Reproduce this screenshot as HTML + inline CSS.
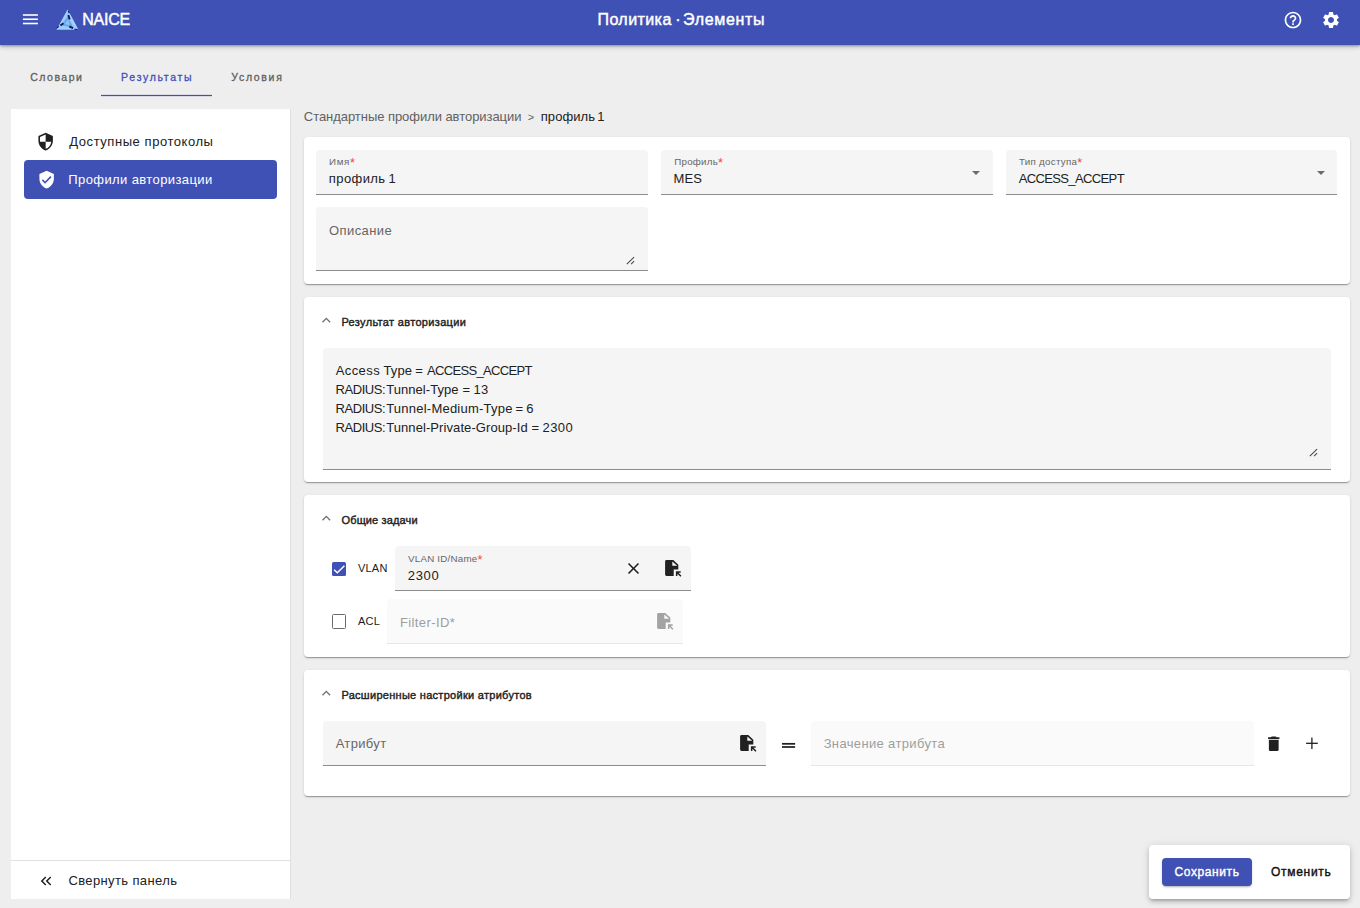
<!DOCTYPE html>
<html lang="ru">
<head>
<meta charset="utf-8">
<title>NAICE</title>
<style>
*{box-sizing:border-box;margin:0;padding:0}
html,body{width:1360px;height:908px;overflow:hidden}
body{background:#eeeeee;font-family:"Liberation Sans",sans-serif;color:#212121;position:relative;font-size:14px}
.abs{position:absolute}
.t{position:absolute;white-space:nowrap;line-height:1}
.t i{font-style:normal;color:#f44336;font-size:1.3em;line-height:0;position:relative;top:2px}
#hdr{left:0;top:0;width:1360px;height:45px;background:#3f51b5;box-shadow:0 1px 2px 0 rgba(0,0,0,.28),0 2px 5px 0 rgba(0,0,0,.2)}
.card{position:absolute;left:304px;width:1046px;background:#fff;border-radius:4px;box-shadow:0 2px 1px -1px rgba(0,0,0,.2),0 1px 1px 0 rgba(0,0,0,.14),0 1px 3px 0 rgba(0,0,0,.12)}
.fld{position:absolute;background:#f5f5f5;border-radius:4px 4px 0 0;border-bottom:1px solid #8c8c8c}
.fld.dis{background:#fafafa;border-bottom:1px solid #e6e6e6}
.arr{position:absolute;width:0;height:0;border-left:4.2px solid transparent;border-right:4.2px solid transparent;border-top:4.3px solid #6b6b6b}
svg{position:absolute;display:block;overflow:visible}
</style>
</head>
<body>

<!-- HEADER -->
<div id="hdr" class="abs">
  <svg style="left:20px;top:10px" width="20" height="18" viewBox="0 0 20 18"><rect x="2.9" y="4.2" width="15" height="1.6" fill="#fff"/><rect x="2.9" y="8.45" width="15" height="1.6" fill="#fff"/><rect x="2.9" y="12.7" width="15" height="1.6" fill="#fff"/></svg>
  <svg id="logo" style="left:56px;top:9px" width="23" height="21" viewBox="0 0 23 21">
    <polygon points="11.5,0.4 22.4,20.7 0.5,20.8" fill="#9dcdfc"/>
    <polygon points="11.9,6.9 4.9,16.2 17.5,19.1" fill="#6ca7ee"/>
    <polygon points="12.4,10.6 9.0,14.6 13.4,16.6" fill="#8fc3f8"/>
    <polygon points="11.5,0.4 13.9,10.2 22.4,20.7" fill="#a6d3ff"/>
    <path d="M12.3 6.0 L13.7 10.4 M4.4 16.4 L7.5 14.2 M13.3 17.5 L17.1 19.1" stroke="#0b1f5c" stroke-width="1.9" fill="none"/>
    <path d="M12.3 1.9 L13.2 4.2 M1.2 18.9 L2.7 17.4 M18.4 20.3 L21.8 20.5" stroke="#0b1f5c" stroke-width="1.1" fill="none"/>
  </svg>
  <svg style="left:1282.6px;top:9.5px" width="20" height="20" viewBox="0 0 24 24"><path fill="#fff" d="M11 18h2v-2h-2v2zm1-16C6.48 2 2 6.48 2 12s4.48 10 10 10 10-4.48 10-10S17.52 2 12 2zm0 18c-4.41 0-8-3.59-8-8s3.59-8 8-8 8 3.59 8 8-3.59 8-8 8zm0-14c-2.21 0-4 1.79-4 4h2c0-1.1.9-2 2-2s2 .9 2 2c0 2-3 1.75-3 5h2c0-2.25 3-2.5 3-5 0-2.21-1.79-4-4-4z"/></svg>
  <svg style="left:1321.2px;top:9.9px" width="20" height="20" viewBox="0 0 24 24"><path fill="#fff" d="M19.14 12.94c.04-.3.06-.61.06-.94 0-.32-.02-.64-.07-.94l2.03-1.58c.18-.14.23-.41.12-.61l-1.92-3.32c-.12-.22-.37-.29-.59-.22l-2.39.96c-.5-.38-1.03-.7-1.62-.94l-.36-2.54c-.04-.24-.24-.41-.48-.41h-3.84c-.24 0-.43.17-.47.41l-.36 2.54c-.59.24-1.13.57-1.62.94l-2.39-.96c-.22-.08-.47 0-.59.22L2.74 8.87c-.12.21-.08.47.12.61l2.03 1.58c-.05.3-.09.63-.09.94s.02.64.07.94l-2.03 1.58c-.18.14-.23.41-.12.61l1.92 3.32c.12.22.37.29.59.22l2.39-.96c.5.38 1.03.7 1.62.94l.36 2.54c.05.24.24.41.48.41h3.84c.24 0 .44-.17.47-.41l.36-2.54c.59-.24 1.13-.56 1.62-.94l2.39.96c.22.08.47 0 .59-.22l1.92-3.32c.12-.22.07-.47-.12-.61l-2.01-1.58zM12 15.6c-1.98 0-3.6-1.62-3.6-3.6s1.62-3.6 3.6-3.6 3.6 1.62 3.6 3.6-1.620 3.600-3.600 3.600z"/></svg>
</div>

<!-- TABS underline -->
<svg style="left:101px;top:94px" width="111" height="3" viewBox="0 0 111 3"><rect x="0" y="0.88" width="111" height="1.25" fill="#3f51b5"/></svg>

<!-- SIDEBAR -->
<div class="abs" id="side" style="left:11px;top:109px;width:280px;height:790px;background:#fff;border-right:1px solid #e0e0e0"></div>
<div class="abs" style="left:24px;top:160px;width:253px;height:39px;background:#3f51b5;border-radius:4px"></div>
<div class="abs" style="left:11px;top:860px;width:279px;height:1px;background:#e0e0e0"></div>
<svg style="left:36.3px;top:131.9px" width="19.3" height="19.3" viewBox="0 0 24 24"><path fill="#212121" d="M12 1L3 5v6c0 5.55 3.84 10.74 9 12 5.16-1.26 9-6.45 9-12V5l-9-4zm0 10.99h7c-.53 4.12-3.28 7.79-7 8.940V12H5V6.300l7-3.110v8.800z"/></svg>
<svg style="left:36.7px;top:169.8px" width="19.3" height="19.3" viewBox="0 0 24 24"><path fill="#fff" d="M12 1L3 5v6c0 5.55 3.84 10.74 9 12 5.16-1.26 9-6.45 9-12V5l-9-4zm-2 16l-4-4 1.41-1.41L10 14.17l6.59-6.59L18 9l-8 8z"/></svg>
<svg style="left:37.25px;top:871.5px" width="18" height="18" viewBox="0 0 24 24"><path fill="#212121" d="M17.59 18L19 16.59 14.42 12 19 7.41 17.59 6l-6 6z M11 18l1.41-1.41L7.83 12l4.58-4.59L11 6l-6 6z"/></svg>

<!-- CARDS -->
<div class="card" style="top:137px;height:147px"></div>
<div class="card" style="top:297px;height:185px"></div>
<div class="card" style="top:495px;height:162px"></div>
<div class="card" style="top:670px;height:126px"></div>

<!-- card1 fields -->
<div class="fld" style="left:316px;top:150px;width:332px;height:45px"></div>
<div class="fld" style="left:661px;top:150px;width:332px;height:45px"></div>
<div class="fld" style="left:1006px;top:150px;width:331px;height:45px"></div>
<div class="fld" style="left:316px;top:207px;width:332px;height:64px"></div>
<div class="arr" style="left:971.8px;top:170.8px"></div>
<div class="arr" style="left:1316.8px;top:170.8px"></div>
<svg style="left:626px;top:256px" width="10" height="9" viewBox="0 0 10 9"><path d="M0.8 8.2 L8.1 1.1 M5.1 8.2 L8.1 5.2" stroke="#4a4a4a" stroke-width="1.1" fill="none"/></svg>

<!-- card2 -->
<svg class="chev" style="left:321.7px;top:317.4px" width="9" height="6" viewBox="0 0 9 6"><path d="M0.5 5.3 L4.3 1.4 L8.1 5.3" stroke="#707070" stroke-width="1.35" fill="none"/></svg>
<div class="fld" style="left:323px;top:348px;width:1008px;height:122px"></div>
<svg style="left:1309.2px;top:447.9px" width="10" height="9" viewBox="0 0 10 9"><path d="M0.8 8.2 L8.1 1.1 M5.1 8.2 L8.1 5.2" stroke="#4a4a4a" stroke-width="1.1" fill="none"/></svg>

<!-- card3 -->
<svg class="chev" style="left:321.7px;top:515.4px" width="9" height="6" viewBox="0 0 9 6"><path d="M0.5 5.3 L4.3 1.4 L8.1 5.3" stroke="#707070" stroke-width="1.35" fill="none"/></svg>
<div class="abs" style="left:332px;top:562px;width:14px;height:14px;background:#3f51b5;border-radius:1.5px"></div>
<svg style="left:332px;top:562px" width="14" height="14" viewBox="0 0 14 14"><path d="M2.1 7.8 L5.3 10.8 L12.4 3.7" stroke="#fff" stroke-width="1.5" fill="none"/></svg>
<div class="abs" style="left:332px;top:614.3px;width:14px;height:14.4px;border:1.3px solid #6b6b6b;border-radius:1.5px;background:#fff"></div>
<div class="fld" style="left:395px;top:546px;width:296px;height:45px"></div>
<div class="fld dis" style="left:387px;top:599px;width:296px;height:45px"></div>
<svg style="left:624px;top:558.95px" width="19" height="19" viewBox="0 0 24 24"><path fill="#212121" d="M19 6.41L17.59 5 12 10.59 6.41 5 5 6.41 10.59 12 5 17.59 6.41 19 12 13.41 17.59 19 19 17.59 13.41 12z"/></svg>
<svg class="fico" style="left:665.3px;top:560.2px" width="17" height="17" viewBox="0 0 17 17"><path fill="#212121" fill-rule="evenodd" d="M1.5 0.1 H8.3 L13.3 4.8 V9.4 H8.7 V16 H1.5 Q0.1 16 0.1 14.6 V1.5 Q0.1 0.1 1.5 0.1 Z M7.3 1.6 V5.7 H12.2 Z"/><path fill="#212121" d="M10.9 11.2 H15.7 V12.7 H13.5 L16.5 15.7 L15.4 16.8 L12.4 13.8 V15.9 H10.9 Z"/></svg>
<svg class="fico" style="left:656.6px;top:613.4px" width="17" height="17" viewBox="0 0 17 17"><path fill="#a3a3a3" fill-rule="evenodd" d="M1.5 0.1 H8.3 L13.3 4.8 V9.4 H8.7 V16 H1.5 Q0.1 16 0.1 14.6 V1.5 Q0.1 0.1 1.5 0.1 Z M7.3 1.6 V5.7 H12.2 Z"/><path fill="#a3a3a3" d="M10.9 11.2 H15.7 V12.7 H13.5 L16.5 15.7 L15.4 16.8 L12.4 13.8 V15.9 H10.9 Z"/></svg>

<!-- card4 -->
<svg class="chev" style="left:321.7px;top:690.4px" width="9" height="6" viewBox="0 0 9 6"><path d="M0.5 5.3 L4.3 1.4 L8.1 5.3" stroke="#707070" stroke-width="1.35" fill="none"/></svg>
<div class="fld" style="left:323px;top:721px;width:443px;height:45px"></div>
<div class="fld dis" style="left:811px;top:721px;width:443px;height:45px"></div>
<svg class="fico" style="left:739.6px;top:735.1px" width="17" height="17" viewBox="0 0 17 17"><path fill="#212121" fill-rule="evenodd" d="M1.5 0.1 H8.3 L13.3 4.8 V9.4 H8.7 V16 H1.5 Q0.1 16 0.1 14.6 V1.5 Q0.1 0.1 1.5 0.1 Z M7.3 1.6 V5.7 H12.2 Z"/><path fill="#212121" d="M10.9 11.2 H15.7 V12.7 H13.5 L16.5 15.7 L15.4 16.8 L12.4 13.8 V15.9 H10.9 Z"/></svg>
<svg style="left:780px;top:740px" width="20" height="12" viewBox="0 0 20 12"><rect x="2.0" y="2.95" width="13.1" height="1.75" fill="#212121"/><rect x="2.0" y="6.1" width="13.1" height="1.8" fill="#2a2a2a"/></svg>
<svg style="left:1263.65px;top:733.65px" width="19.5" height="19.5" viewBox="0 0 24 24"><path fill="#212121" d="M6 19c0 1.1.9 2 2 2h8c1.1 0 2-.9 2-2V7H6v12zM19 4h-3.500l-1-1h-5l-1 1H5v2h14V4z"/></svg>
<svg style="left:1300px;top:732px" width="24" height="24" viewBox="0 0 24 24"><rect x="6.1" y="10.65" width="11.7" height="1.3" fill="#212121"/><rect x="11.25" y="5.6" width="1.3" height="11.4" fill="#212121"/></svg>

<!-- BOTTOM BUTTONS -->
<div class="abs" style="left:1149px;top:845px;width:201px;height:54px;background:#fff;border-radius:4px;box-shadow:0 3px 3px -2px rgba(0,0,0,.2),0 3px 4px 0 rgba(0,0,0,.14),0 1px 8px 0 rgba(0,0,0,.12)"></div>
<div class="abs" style="left:1162px;top:858px;width:90px;height:28px;background:#3f51b5;border-radius:4px;box-shadow:0 2px 2px -1px rgba(0,0,0,.22),0 1px 3px 0 rgba(0,0,0,.12)"></div>



<div class="t" id="brand" style="left:82.34px;top:12.00px;font-size:16px;color:#fff;letter-spacing:-0.279px;-webkit-text-stroke:0.45px #fff;">NAICE</div>
<div class="t" id="title1" style="left:597.47px;top:12.00px;font-size:16px;color:#fff;letter-spacing:0.428px;-webkit-text-stroke:0.45px #fff;">Политика</div>
<div class="t" id="title2" style="left:675.31px;top:12.00px;font-size:16px;color:#fff;-webkit-text-stroke:0.45px #fff;">·</div>
<div class="t" id="title3" style="left:683.11px;top:12.00px;font-size:16px;color:#fff;letter-spacing:0.643px;-webkit-text-stroke:0.45px #fff;">Элементы</div>
<div class="t" id="tab1" style="left:30.18px;top:72.00px;font-size:10.5px;color:#5f5f5f;letter-spacing:1.518px;-webkit-text-stroke:0.3px #5f5f5f;">Словари</div>
<div class="t" id="tab2" style="left:121.12px;top:72.00px;font-size:10.5px;color:#3f51b5;letter-spacing:1.685px;-webkit-text-stroke:0.3px #3f51b5;">Результаты</div>
<div class="t" id="tab3" style="left:231.31px;top:72.00px;font-size:10.5px;color:#5f5f5f;letter-spacing:1.683px;-webkit-text-stroke:0.3px #5f5f5f;">Условия</div>
<div class="t" id="sb1" style="left:69.34px;top:135.00px;font-size:13px;color:#212121;letter-spacing:0.553px;">Доступные протоколы</div>
<div class="t" id="sb2" style="left:68.36px;top:173.00px;font-size:13px;color:#fff;letter-spacing:0.391px;">Профили авторизации</div>
<div class="t" id="sb3" style="left:68.45px;top:874.00px;font-size:13px;color:#212121;letter-spacing:0.374px;">Свернуть панель</div>
<div class="t" id="bc1" style="left:303.85px;top:110.00px;font-size:13px;color:#616161;letter-spacing:-0.050px;">Стандартные профили авторизации</div>
<div class="t" id="bc2" style="left:527.75px;top:112.00px;font-size:11px;color:#616161;">&gt;</div>
<div class="t" id="bc3a" style="left:540.76px;top:110.00px;font-size:13px;color:#212121;letter-spacing:0.079px;">профиль</div>
<div class="t" id="bc3b" style="left:597.13px;top:110.00px;font-size:13px;color:#212121;">1</div>
<div class="t" id="v1a" style="left:328.86px;top:172.00px;font-size:13px;color:#212121;letter-spacing:0.396px;">профиль</div>
<div class="t" id="v1b" style="left:388.43px;top:172.00px;font-size:13px;color:#212121;">1</div>
<div class="t" id="l1" style="left:329.09px;top:157.00px;font-size:9.75px;color:#666;letter-spacing:0.612px;">Имя<i>*</i></div>
<div class="t" id="l2" style="left:674.18px;top:157.00px;font-size:9.75px;color:#666;letter-spacing:0.263px;">Профиль<i>*</i></div>
<div class="t" id="v2" style="left:673.46px;top:172.00px;font-size:13px;color:#212121;letter-spacing:0.093px;">MES</div>
<div class="t" id="l3" style="left:1018.92px;top:157.00px;font-size:9.75px;color:#666;letter-spacing:0.292px;">Тип доступа<i>*</i></div>
<div class="t" id="v3" style="left:1018.65px;top:172.00px;font-size:13px;color:#212121;letter-spacing:-0.623px;">ACCESS_ACCEPT</div>
<div class="t" id="p1" style="left:329.08px;top:224.00px;font-size:13px;color:#666;letter-spacing:0.403px;">Описание</div>
<div class="t" id="s2" style="left:341.42px;top:317.00px;font-size:11px;color:#212121;letter-spacing:0.330px;-webkit-text-stroke:0.4px #212121;">Результат авторизации</div>
<div class="t" id="a1a" style="left:335.75px;top:364.00px;font-size:13px;color:#212121;letter-spacing:0.398px;">Access</div>
<div class="t" id="a1b" style="left:383.39px;top:364.00px;font-size:13px;color:#212121;letter-spacing:0.165px;">Type</div>
<div class="t" id="a1c" style="left:415.30px;top:364.00px;font-size:13px;color:#212121;">=</div>
<div class="t" id="a1d" style="left:426.95px;top:364.00px;font-size:13px;color:#212121;letter-spacing:-0.665px;">ACCESS_ACCEPT</div>
<div class="t" id="a2a" style="left:335.46px;top:383.00px;font-size:13px;color:#212121;letter-spacing:-0.418px;">RADIUS:</div>
<div class="t" id="a2b" style="left:386.19px;top:383.00px;font-size:13px;color:#212121;letter-spacing:0.051px;">Tunnel-Type</div>
<div class="t" id="a2c" style="left:462.50px;top:383.00px;font-size:13px;color:#212121;">=</div>
<div class="t" id="a2d" style="left:473.43px;top:383.00px;font-size:13px;color:#212121;letter-spacing:0.470px;">13</div>
<div class="t" id="a3a" style="left:335.46px;top:402.00px;font-size:13px;color:#212121;letter-spacing:-0.418px;">RADIUS:</div>
<div class="t" id="a3b" style="left:386.19px;top:402.00px;font-size:13px;color:#212121;letter-spacing:0.229px;">Tunnel-Medium-Type</div>
<div class="t" id="a3c" style="left:515.50px;top:402.00px;font-size:13px;color:#212121;">=</div>
<div class="t" id="a3d" style="left:526.36px;top:402.00px;font-size:13px;color:#212121;">6</div>
<div class="t" id="a4a" style="left:335.46px;top:421.00px;font-size:13px;color:#212121;letter-spacing:-0.418px;">RADIUS:</div>
<div class="t" id="a4b" style="left:386.19px;top:421.00px;font-size:13px;color:#212121;letter-spacing:0.083px;">Tunnel-Private-Group-Id</div>
<div class="t" id="a4c" style="left:531.50px;top:421.00px;font-size:13px;color:#212121;">=</div>
<div class="t" id="a4d" style="left:542.54px;top:421.00px;font-size:13px;color:#212121;letter-spacing:0.400px;">2300</div>
<div class="t" id="s3" style="left:341.51px;top:515.00px;font-size:11px;color:#212121;letter-spacing:0.142px;-webkit-text-stroke:0.4px #212121;">Общие задачи</div>
<div class="t" id="c1" style="left:357.98px;top:563.00px;font-size:11px;color:#212121;letter-spacing:0.223px;">VLAN</div>
<div class="t" id="c2" style="left:357.96px;top:616.00px;font-size:11px;color:#212121;letter-spacing:0.197px;">ACL</div>
<div class="t" id="l4" style="left:408.02px;top:554.00px;font-size:9.75px;color:#666;letter-spacing:0.233px;">VLAN ID/Name<i>*</i></div>
<div class="t" id="v4" style="left:407.74px;top:569.00px;font-size:13px;color:#212121;letter-spacing:0.667px;">2300</div>
<div class="t" id="p2" style="left:399.96px;top:616.00px;font-size:13px;color:#9e9e9e;letter-spacing:0.394px;">Filter-ID*</div>
<div class="t" id="s4" style="left:341.42px;top:690.00px;font-size:11px;color:#212121;letter-spacing:0.283px;-webkit-text-stroke:0.4px #212121;">Расширенные настройки атрибутов</div>
<div class="t" id="p3" style="left:335.65px;top:737.00px;font-size:13px;color:#666;letter-spacing:0.345px;">Атрибут</div>
<div class="t" id="p4" style="left:823.67px;top:737.00px;font-size:13px;color:#9e9e9e;letter-spacing:0.356px;">Значение атрибута</div>
<div class="t" id="btn1" style="left:1174.61px;top:866.00px;font-size:12px;color:#fff;letter-spacing:0.583px;-webkit-text-stroke:0.4px #fff;">Сохранить</div>
<div class="t" id="btn2" style="left:1271.06px;top:866.00px;font-size:12px;color:#111;letter-spacing:0.703px;-webkit-text-stroke:0.4px #111;">Отменить</div>

</body>
</html>
